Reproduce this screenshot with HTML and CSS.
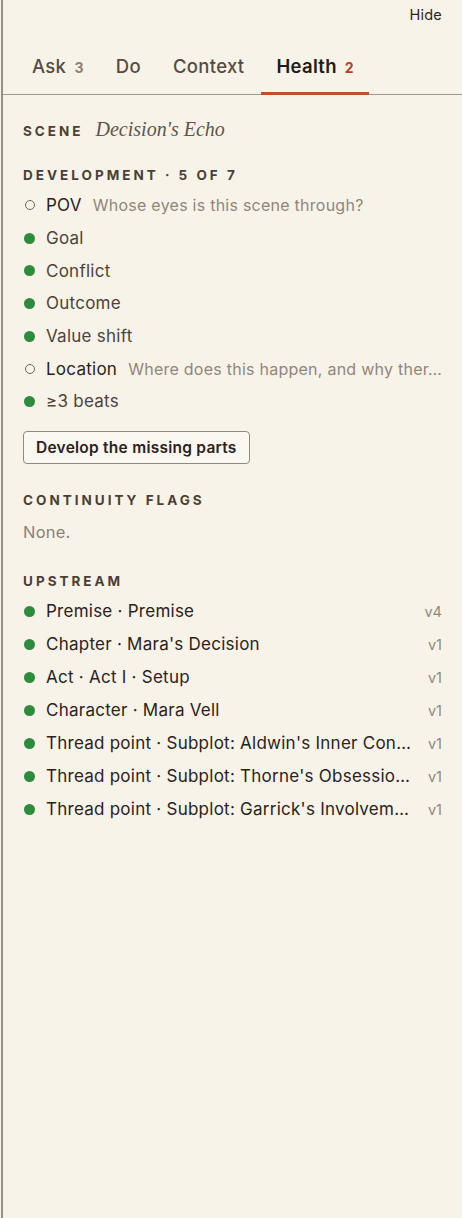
FILE: index.html
```html
<!DOCTYPE html>
<html>
<head>
<meta charset="utf-8">
<link rel="stylesheet" href="styles.css">
</head>
<body>
<div class="panel">
  <div class="topbar"><span class="hide">Hide</span></div>
  <nav class="tabs">
    <div class="tab">Ask <span class="count">3</span></div>
    <div class="tab">Do</div>
    <div class="tab">Context</div>
    <div class="tab active">Health <span class="count red">2</span></div>
  </nav>
  <div class="content">
    <div class="scene"><span class="label">Scene</span><span class="title">Decision's Echo</span></div>

    <div class="label section">Development · 5 of 7</div>
    <ul class="list dev">
      <li><span class="dot empty"></span><span class="name dark">POV</span><span class="hint">Whose eyes is this scene through?</span></li>
      <li><span class="dot"></span><span class="name">Goal</span></li>
      <li><span class="dot"></span><span class="name">Conflict</span></li>
      <li><span class="dot"></span><span class="name">Outcome</span></li>
      <li><span class="dot"></span><span class="name">Value shift</span></li>
      <li><span class="dot empty"></span><span class="name dark">Location</span><span class="hint">Where does this happen, and why ther…</span></li>
      <li><span class="dot"></span><span class="name">≥3 beats</span></li>
    </ul>
    <button class="btn">Develop the missing parts</button>

    <div class="label section flags">Continuity flags</div>
    <div class="none">None.</div>

    <div class="label section upstream">Upstream</div>
    <ul class="list up">
      <li><span class="dot"></span><span class="name dark grow">Premise · Premise</span><span class="ver">v4</span></li>
      <li><span class="dot"></span><span class="name dark grow">Chapter · Mara's Decision</span><span class="ver">v1</span></li>
      <li><span class="dot"></span><span class="name dark grow">Act · Act I · Setup</span><span class="ver">v1</span></li>
      <li><span class="dot"></span><span class="name dark grow">Character · Mara Vell</span><span class="ver">v1</span></li>
      <li><span class="dot"></span><span class="name dark grow">Thread point · Subplot: Aldwin's Inner Con…</span><span class="ver">v1</span></li>
      <li><span class="dot"></span><span class="name dark grow">Thread point · Subplot: Thorne's Obsessio…</span><span class="ver">v1</span></li>
      <li><span class="dot"></span><span class="name dark grow">Thread point · Subplot: Garrick's Involvem…</span><span class="ver">v1</span></li>
    </ul>
  </div>
</div>
</body>
</html>
```

FILE: styles.css
```css
* { box-sizing: border-box; }
html, body { margin: 0; padding: 0; background: #f8f3e9; }
body {
  font-family: "Inter", "Liberation Sans", sans-serif;
  color: #4a4038;
}
.panel {
  margin-left: 1px;
  border-left: 2px solid #958f85;
  min-height: 1218px;
  background: #f8f3e9;
}
.topbar {
  display: flex;
  justify-content: flex-end;
  padding: 6px 20px 0 0;
  height: 41px;
}
.hide { font-size: 14.5px; color: #2d2620; letter-spacing: 0.2px; }
.tabs {
  display: flex;
  gap: 2px;
  padding-left: 14px;
  border-bottom: 1px solid #9e988d;
}
.tab {
  padding: 13px 15px 12px;
  font-size: 18.5px;
  font-weight: 500;
  letter-spacing: 0.3px;
  color: #564b41;
  line-height: 24px;
  border-bottom: 3px solid transparent;
  margin-bottom: -1px;
}
.tab.active { color: #221b15; font-weight: 600; border-bottom-color: #bd4f34; }
.count { font-size: 14px; font-weight: 700; color: #8a8176; margin-left: 3px; }
.count.red { color: #b3432a; }
.content { padding: 23px 20px 0 20px; }
.label {
  font-size: 13.5px;
  font-weight: 700;
  letter-spacing: 3px;
  text-transform: uppercase;
  color: #4a3f36;
}
.scene { display: flex; align-items: baseline; gap: 12px; }
.title {
  font-family: "Liberation Serif", serif;
  font-style: italic;
  font-size: 20px;
  color: #5e544b;
}
.section { margin-top: 26px; margin-bottom: 6px; }
.list { list-style: none; margin: 0; padding: 0; }
.list li {
  display: flex;
  align-items: center;
  height: 32.7px;
  font-size: 17px;
  letter-spacing: 0.25px;
}
.list.up li { height: 33px; }
.dot {
  width: 11px; height: 11px; border-radius: 50%;
  background: #2e8b3e;
  flex: none;
  margin-right: 11px;
  margin-left: 1px;
}
.dot.empty { background: transparent; border: 1.3px solid #6f665d; width: 10px; height: 10px; margin-left: 1.5px; margin-right: 11.5px; }
.name { color: #4d4239; white-space: nowrap; }
.name.dark { color: #2a221c; }
.hint { margin-left: 11px; color: #8f867b; font-size: 16px; white-space: nowrap; }
.grow { flex: 1; min-width: 0; }
.ver { margin-left: 12px; color: #8f867b; font-size: 14.5px; flex: none; letter-spacing: 0; }
.btn {
  margin-top: 13px;
  font-family: inherit;
  font-size: 15.5px;
  font-weight: 600;
  letter-spacing: 0.25px;
  color: #2a221c;
  background: #fbf8f2;
  border: 1px solid #8f897f;
  border-radius: 4px;
  padding: 5px 12px;
  height: 33px;
}
.flags { margin-top: 28px; }
.none { font-size: 16.5px; color: #8a8176; margin-top: 14px; letter-spacing: 0.2px; }
.upstream { margin-top: 31px; }
```
